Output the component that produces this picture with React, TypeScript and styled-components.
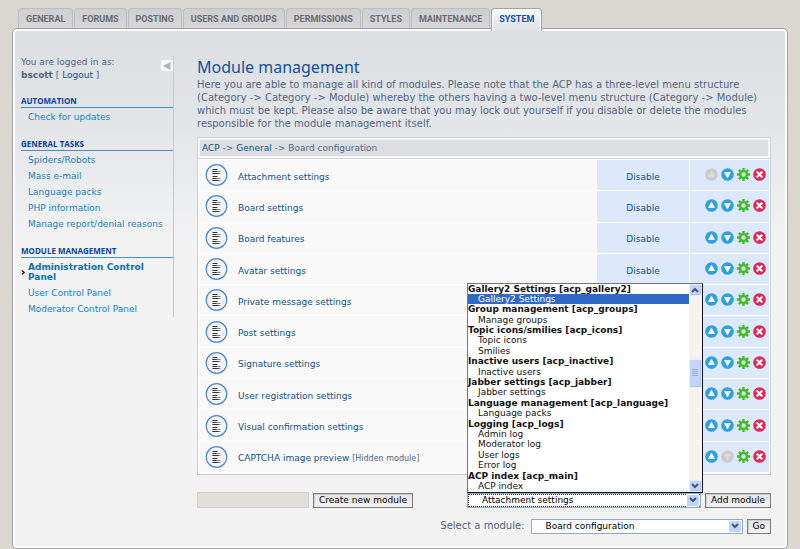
import React from 'react';
import styled, { createGlobalStyle, css } from 'styled-components';

const GlobalStyle = createGlobalStyle`
  *, *::before, *::after { box-sizing: border-box; }
  body {
    margin: 0;
    background: #dad7d0;
    color: #536482;
    font: 9px/16px "DejaVu Sans", Verdana, sans-serif;
  }
  a { color: #105289; text-decoration: none; }
  a:hover { text-decoration: underline; }
  ul { list-style: none; margin: 0; padding: 0; }
`;

const Page = styled.div`
  padding: 8px 12px 0;
`;

const Tabs = styled.nav`
  display: flex;
  gap: 1px;
  padding-left: 6px;
  position: relative;
`;

const Tab = styled.a<{ $active?: boolean }>`
  height: 20px;
  padding: 0 7px;
  border: 1px solid #bdbdbf;
  border-bottom: 0;
  border-radius: 4px 4px 0 0;
  background: linear-gradient(#cdcfd2, #d6d6d8);
  font: bold 9px/21px Roboto, Arial, sans-serif;
  text-transform: uppercase;
  && { color: #6b6b6e; }
  ${(p) =>
    p.$active &&
    css`
      height: 23px;
      margin-bottom: -3px;
      border: 1px solid #a5a3a0;
      border-bottom: 0;
      background: linear-gradient(#f6f8fa, #dfe2e5);
      box-shadow: inset 1px 1px 0 #ffffff, inset -1px 0 0 #ffffff;
      && { color: #1150a0; }
    `}
`;

const Panel = styled.div`
  display: flex;
  align-items: flex-start;
  gap: 23px;
  padding: 27px 16px 14px 6px;
  border: 1px solid #a3a1a1;
  border-radius: 5px;
  box-shadow: inset 0 0 0 2px #ffffff;
  background: linear-gradient(#dadfe2, #e5e7ea 110px, #f2f2f3 210px, #f2f2f2);
`;

const Sidebar = styled.aside`
  flex: 0 0 153px;
  margin-left: 2px;
  border-right: 1px solid #c5c8cd;
`;

const LoginInfo = styled.div`
  display: flex;
  justify-content: space-between;
  align-items: flex-start;
  margin-bottom: 13px;
`;

const LoginText = styled.p`
  margin: 0;
  line-height: 13px;
`;

const Collapse = styled.button`
  display: flex;
  align-items: center;
  justify-content: center;
  width: 13px;
  height: 13px;
  margin-top: 3px;
  padding: 0;
  border: 1px solid #e2e4e6;
  border-right: 0;
  border-radius: 3px 0 0 3px;
  background: #f6f7f8;
`;

const MenuTitle = styled.h2`
  margin: 0 0 1px;
  border-bottom: 1px solid #4d8fbe;
  color: #0a429d;
  font: bold 8px/12px "Open Sans", Verdana, sans-serif;
  text-transform: uppercase;
`;

const MenuSection = styled.section`
  margin-bottom: 13px;
  &:last-child { margin-bottom: 0; }
`;

const MenuItem = styled.li<{ $current?: boolean }>`
  display: flex;
  align-items: center;
  line-height: 16px;
  svg { flex: 0 0 7px; }
  a { color: #1782bd; }
  padding-left: 7px;
  ${(p) =>
    p.$current &&
    css`
      padding: 3px 0;
      line-height: 10px;
      font-weight: bold;
      a { color: #0d71ac; }
    `}
`;

const Main = styled.main`
  flex: 1;
  min-width: 0;
`;

const Title = styled.h1`
  margin: 0;
  color: #1150a0;
  font: 16px/22px "Noto Sans", "Trebuchet MS", sans-serif;
`;

const Description = styled.p`
  margin: 0 0 7px;
  font-size: 10px;
  line-height: 13px;
`;

const Breadcrumb = styled.div`
  padding: 0 3px;
  border: 2px solid #ffffff;
  outline: 1px solid #cccfd3;
  outline-offset: -1px;
  background: #dbdfe2;
  box-shadow: inset 0 0 0 1px #f4f5f5;
  height: 22px;
  line-height: 19px;
`;

const ModuleTable = styled.table`
  width: 100%;
  height: 316px;
  border: 1px solid #cccfd3;
  border-top: 0;
  border-spacing: 0;
  background: #ffffff;
  padding: 1px;
  td {
    padding: 0;
    border-bottom: 1px solid #ffffff;
    background: #f9f9f9;
  }
`;

const IconCell = styled.td`
  && {
    width: 39px;
    padding-left: 6px;
  }
  svg { display: block; }
`;

const NameCell = styled.td`
  && { padding-top: 3px; }
  small { font-size: 8px; }
`;

const ToggleCell = styled.td`
  && {
    width: 93px;
    padding-top: 3px;
    border-right: 1px solid #ffffff;
    background: #dbe9fb;
    text-align: center;
  }
`;

const ActionCell = styled.td`
  && { width: 79px; background: #dbe9fb; }
`;

const Actions = styled.div`
  display: flex;
  justify-content: flex-end;
  gap: 3px;
  padding: 0 3px 1px 0;
`;

const IconButton = styled.button`
  width: 13px;
  height: 13px;
  padding: 0;
  border: 0;
  background: none;
  svg { display: block; }
`;

const FormRow = styled.form<{ $end?: boolean }>`
  display: flex;
  align-items: center;
  justify-content: ${(p) => (p.$end ? 'flex-end' : 'flex-start')};
  gap: 4px;
  margin-top: ${(p) => (p.$end ? 10 : 17)}px;
  label { font-size: 10px; margin-right: 2px; }
`;

const NameInput = styled.input`
  width: 112px;
  height: 16px;
  padding: 0 3px;
  border: 1px solid #ccd0c6;
  background: #e1dfd8;
  font: inherit;
`;

const Button = styled.button`
  height: 15px;
  padding: 0 5px;
  border: 1px solid #7c7c7c;
  background: linear-gradient(#e4e4e4, #f2f2f2);
  box-shadow: inset 1px 1px 0 #cfcfcf;
  color: #000000;
  font: 9px/13px "DejaVu Sans", Verdana, sans-serif;
  white-space: nowrap;
`;

const SelectBox = styled.div<{ $push?: boolean }>`
  position: relative;
  display: flex;
  flex: 0 0 ${(p) => (p.$push ? 234 : 212)}px;
  margin-left: ${(p) => (p.$push ? 'auto' : 0)};
`;

const Select = styled.select<{ $focused?: boolean }>`
  appearance: none;
  flex: 1;
  height: 15px;
  margin: 0;
  padding: 0 16px 0 14px;
  border: 1px solid #8fabc9;
  border-radius: 0;
  background: #ffffff;
  color: #000000;
  font: 9px/13px "DejaVu Sans", Verdana, sans-serif;
  outline: ${(p) => (p.$focused ? '1px dotted #333333' : 'none')};
  outline-offset: -2px;
`;

const SelectArrow = styled.span`
  position: absolute;
  top: 1px;
  right: 1px;
  bottom: 1px;
  display: flex;
  align-items: center;
  justify-content: center;
  width: 14px;
  border: 1px solid #ffffff;
  border-radius: 2px;
  background: #c3d4fb;
  pointer-events: none;
`;

const Popup = styled.div`
  position: absolute;
  left: 0;
  right: -2px;
  bottom: 100%;
  display: flex;
  border: 1px solid #111318;
  border-top-color: #777777;
  border-left-color: #777777;
  background: #ffffff;
`;

const OptionList = styled.ul`
  && {
    flex: 1;
    display: grid;
    grid-template-rows: repeat(20, 1fr);
    height: 208px;
  }
`;

const Option = styled.li<{ $group?: boolean; $selected?: boolean }>`
  min-height: 0;
  padding-left: ${(p) => (p.$group ? 0 : 10)}px;
  font-weight: ${(p) => (p.$group ? 'bold' : 'normal')};
  line-height: 10px;
  white-space: nowrap;
  background: ${(p) => (p.$selected ? '#316ac5' : 'transparent')};
  color: ${(p) => (p.$selected ? '#ffffff' : '#111111')};
`;

const ScrollTrack = styled.div`
  display: grid;
  grid-template-rows: 12px 63px 29px 1fr 12px;
  width: 13px;
  background: #f4f3ee;
`;

const ScrollPart = styled.span<{ $row: number }>`
  grid-row: ${(p) => p.$row};
  display: flex;
  align-items: center;
  justify-content: center;
  border: 1px solid #e6edfc;
  border-radius: 2px;
  background: #c3d3fb;
  box-shadow: inset -1px -1px 0 #b0c4f2;
`;

const Chevron = ({ up }: { up?: boolean }) => (
  <svg width="8" height="6" viewBox="0 0 8 6" aria-hidden="true">
    <path d={up ? 'M1 5l3-3 3 3' : 'M1 1l3 3 3-3'} fill="none" stroke="#3d5584" strokeWidth="2" />
  </svg>
);

const PageIcon = () => (
  <svg width="24" height="24" viewBox="0 0 24 24" aria-hidden="true">
    <circle cx="11.5" cy="12" r="10.3" fill="#f3f4f6" stroke="#4a87cc" strokeWidth="1.2" />
    <path d="M7.500 6.500h5M7.500 13.500h5" stroke="#333" strokeWidth="1.200" />
    <path d="M7.500 8.500h8M7.500 10.500h8M7.500 15.500h8M7.500 17.500h8" stroke="#888" strokeWidth="1" />
    <path d="M7.500 8.500h4M7.500 10.500h6M7.500 15.500h4M7.500 17.500h6" stroke="#333" strokeWidth="1" />
  </svg>
);

const MoveIcon = ({ down, off }: { down?: boolean; off?: boolean }) => (
  <svg width="13" height="13" viewBox="0 0 13 13" aria-hidden="true">
    <circle cx="6.5" cy="6.5" r="6.3" fill={off ? '#cbcbcb' : '#319fe2'} />
    <path
      d={down ? 'M3.600 4.500h5.800L6.500 9.800z' : 'M3.600 8.500h5.800L6.500 3.200z'}
      fill={off ? '#dedede' : '#ffffff'}
      stroke={off ? '#dedede' : '#ffffff'}
      strokeWidth=".8"
      strokeLinejoin="round"
    />
  </svg>
);

const GearIcon = () => (
  <svg width="13" height="13" viewBox="0 0 13 13" aria-hidden="true">
    <g stroke="#3fbd23" strokeWidth="2.300">
      <path d="M6.500 0v3M6.500 10v3M0 6.500h3M10 6.500h3M1.900 1.900l2.200 2.200M8.900 8.900l2.200 2.200M1.900 11.100l2.200-2.200M8.900 4.100l2.200-2.200" />
      <circle cx="6.5" cy="6.5" r="3.400" fill="none" />
    </g>
  </svg>
);

const DeleteIcon = () => (
  <svg width="13" height="13" viewBox="0 0 13 13" aria-hidden="true">
    <circle cx="6.5" cy="6.5" r="6.3" fill="#e22850" />
    <path d="M4.300 4.300l4.400 4.400M8.700 4.300l-4.400 4.400" stroke="#ffffff" strokeWidth="2.200" strokeLinecap="round" />
  </svg>
);

const TABS = ['General', 'Forums', 'Posting', 'Users and Groups', 'Permissions', 'Styles', 'Maintenance', 'System'];

const MENU = [
  { title: 'Automation', items: ['Check for updates'] },
  {
    title: 'General tasks',
    items: ['Spiders/Robots', 'Mass e-mail', 'Language packs', 'PHP information', 'Manage report/denial reasons'],
  },
  { title: 'Module management', items: ['Administration Control Panel', 'User Control Panel', 'Moderator Control Panel'] },
];

const CURRENT = 'Administration Control Panel';

const MODULES = [
  'Attachment settings',
  'Board settings',
  'Board features',
  'Avatar settings',
  'Private message settings',
  'Post settings',
  'Signature settings',
  'User registration settings',
  'Visual confirmation settings',
  'CAPTCHA image preview',
];

const OPTIONS: { label: string; group?: boolean }[] = [
  { label: 'Gallery2 Settings [acp_gallery2]', group: true },
  { label: 'Gallery2 Settings' },
  { label: 'Group management [acp_groups]', group: true },
  { label: 'Manage groups' },
  { label: 'Topic icons/smilies [acp_icons]', group: true },
  { label: 'Topic icons' },
  { label: 'Smilies' },
  { label: 'Inactive users [acp_inactive]', group: true },
  { label: 'Inactive users' },
  { label: 'Jabber settings [acp_jabber]', group: true },
  { label: 'Jabber settings' },
  { label: 'Language management [acp_language]', group: true },
  { label: 'Language packs' },
  { label: 'Logging [acp_logs]', group: true },
  { label: 'Admin log' },
  { label: 'Moderator log' },
  { label: 'User logs' },
  { label: 'Error log' },
  { label: 'ACP index [acp_main]', group: true },
  { label: 'ACP index' },
];

export default function App() {
  return (
    <Page>
      <GlobalStyle />
      <Tabs>
        {TABS.map((tab) => (
          <Tab key={tab} href="#" $active={tab === 'System'}>
            {tab}
          </Tab>
        ))}
      </Tabs>
      <Panel>
        <Sidebar>
          <LoginInfo>
            <LoginText>
              You are logged in as:
              <br />
              <strong>bscott</strong> [ <a href="#">Logout</a> ]
            </LoginText>
            <Collapse type="button" aria-label="Hide menu">
              <svg width="8" height="8" viewBox="0 0 8 8" aria-hidden="true">
                <path d="M7.500 0v8L0 4z" fill="#b3b3b5" />
              </svg>
            </Collapse>
          </LoginInfo>
          {MENU.map((section) => (
            <MenuSection key={section.title}>
              <MenuTitle>{section.title}</MenuTitle>
              <ul>
                {section.items.map((item) => (
                  <MenuItem key={item} $current={item === CURRENT}>
                    {item === CURRENT && (
                      <svg width="7" height="7" viewBox="0 0 7 7" aria-hidden="true">
                        <path d="M1 1.500l2 2-2 2" fill="none" stroke="#222222" strokeWidth="1.500" />
                      </svg>
                    )}
                    <a href="#">{item}</a>
                  </MenuItem>
                ))}
              </ul>
            </MenuSection>
          ))}
        </Sidebar>
        <Main>
          <Title>Module management</Title>
          <Description>
            Here you are able to manage all kind of modules. Please note that the ACP has a three-level menu structure
            (Category -&gt; Category -&gt; Module) whereby the others having a two-level menu structure (Category -&gt;
            Module) which must be kept. Please also be aware that you may lock out yourself if you disable or delete the
            modules responsible for the module management itself.
          </Description>
          <Breadcrumb>
            <a href="#">ACP</a> -&gt; <a href="#">General</a> -&gt; Board configuration
          </Breadcrumb>
          <ModuleTable>
            <tbody>
              {MODULES.map((name, i) => (
                <tr key={name}>
                  <IconCell>
                    <PageIcon />
                  </IconCell>
                  <NameCell>
                    <a href="#">{name}</a> {i === MODULES.length - 1 && <small>[Hidden module]</small>}
                  </NameCell>
                  <ToggleCell>
                    <a href="#">Disable</a>
                  </ToggleCell>
                  <ActionCell>
                    <Actions>
                      <IconButton type="button" aria-label={`Move ${name} up`} disabled={i === 0}>
                        <MoveIcon off={i === 0} />
                      </IconButton>
                      <IconButton type="button" aria-label={`Move ${name} down`} disabled={i === MODULES.length - 1}>
                        <MoveIcon down off={i === MODULES.length - 1} />
                      </IconButton>
                      <IconButton type="button" aria-label={`Edit ${name}`}>
                        <GearIcon />
                      </IconButton>
                      <IconButton type="button" aria-label={`Delete ${name}`}>
                        <DeleteIcon />
                      </IconButton>
                    </Actions>
                  </ActionCell>
                </tr>
              ))}
            </tbody>
          </ModuleTable>
          <FormRow>
            <NameInput type="text" aria-label="New module name" />
            <Button type="button">Create new module</Button>
            <SelectBox $push>
              <Select aria-label="Module to add" $focused>
                <option>Attachment settings</option>
              </Select>
              <SelectArrow>
                <Chevron />
              </SelectArrow>
              <Popup>
                <OptionList role="listbox" aria-label="Available modules">
                  {OPTIONS.map((o, i) => (
                    <Option
                      key={o.label}
                      role={o.group ? 'presentation' : 'option'}
                      aria-selected={o.group ? undefined : i === 1}
                      $group={o.group}
                      $selected={i === 1}
                    >
                      {o.label}
                    </Option>
                  ))}
                </OptionList>
                <ScrollTrack aria-hidden="true">
                  <ScrollPart $row={1}>
                    <Chevron up />
                  </ScrollPart>
                  <ScrollPart $row={3}>
                    <svg width="6" height="8" viewBox="0 0 6 8">
                      <path d="M0 .5h6M0 2.500h6M0 4.500h6M0 6.500h6" stroke="#96aee0" />
                    </svg>
                  </ScrollPart>
                  <ScrollPart $row={5}>
                    <Chevron />
                  </ScrollPart>
                </ScrollTrack>
              </Popup>
            </SelectBox>
            <Button type="button">Add module</Button>
          </FormRow>
          <FormRow $end>
            <label htmlFor="jump">Select a module:</label>
            <SelectBox>
              <Select id="jump">
                <option>Board configuration</option>
              </Select>
              <SelectArrow>
                <Chevron />
              </SelectArrow>
            </SelectBox>
            <Button type="submit">Go</Button>
          </FormRow>
        </Main>
      </Panel>
    </Page>
  );
}
